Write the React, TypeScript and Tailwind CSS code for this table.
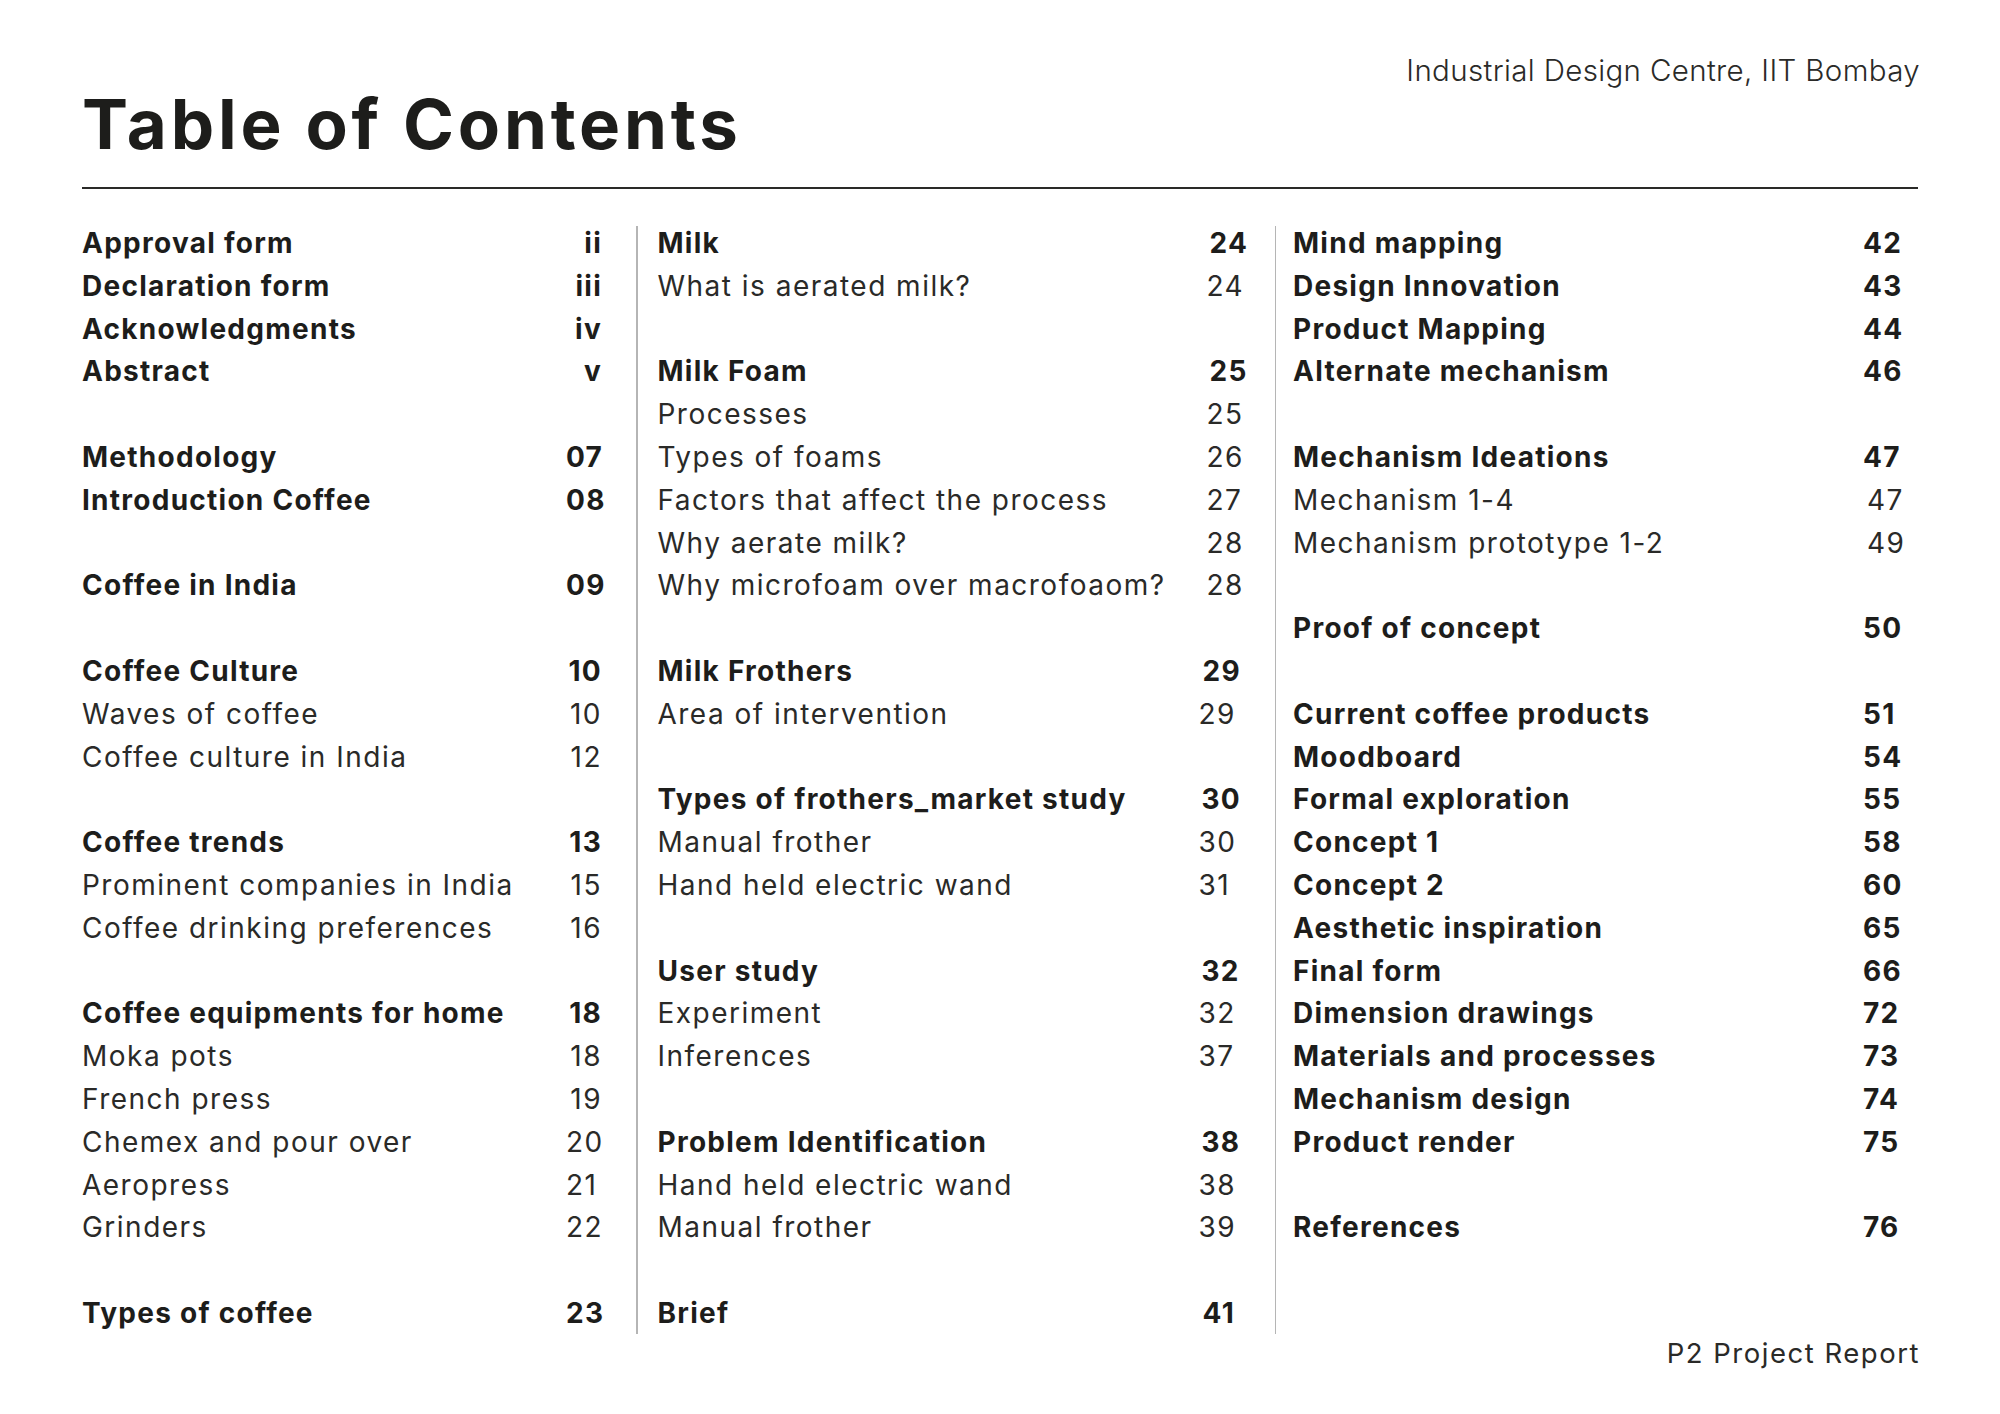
type Entry = { t?: string; n?: string; b?: boolean; a?: string }

const blank: Entry = {}

const colOne: Entry[] = [
  { t: 'Approval form', n: 'ii', b: true, a: 'text-left' },
  { t: 'Declaration form', n: 'iii', b: true, a: 'text-left' },
  { t: 'Acknowledgments', n: 'iv', b: true, a: 'text-left' },
  { t: 'Abstract', n: 'v', b: true, a: 'text-left' },
  blank,
  { t: 'Methodology', n: '07', b: true },
  { t: 'Introduction Coffee', n: '08', b: true },
  blank,
  { t: 'Coffee in India', n: '09', b: true },
  blank,
  { t: 'Coffee Culture', n: '10', b: true },
  { t: 'Waves of coffee', n: '10' },
  { t: 'Coffee culture in India', n: '12' },
  blank,
  { t: 'Coffee trends', n: '13', b: true },
  { t: 'Prominent companies in India', n: '15' },
  { t: 'Coffee drinking preferences', n: '16' },
  blank,
  { t: 'Coffee equipments for home', n: '18', b: true },
  { t: 'Moka pots', n: '18' },
  { t: 'French press', n: '19' },
  { t: 'Chemex and pour over', n: '20' },
  { t: 'Aeropress', n: '21', a: 'text-right pr-[9px]' },
  { t: 'Grinders', n: '22', a: 'text-right pr-[2px]' },
  blank,
  { t: 'Types of coffee', n: '23', b: true, a: 'text-right pr-[5px]' },
]

const colTwo: Entry[] = [
  { t: 'Milk', n: '24', b: true, a: 'pl-[11px]' },
  { t: 'What is aerated milk?', n: '24', a: 'pl-[8px]' },
  blank,
  { t: 'Milk Foam', n: '25', b: true, a: 'pl-[11px]' },
  { t: 'Processes', n: '25', a: 'pl-[8px]' },
  { t: 'Types of foams', n: '26', a: 'pl-[8px]' },
  { t: 'Factors that affect the process', n: '27', a: 'pl-[8px]' },
  { t: 'Why aerate milk?', n: '28', a: 'pl-[8px]' },
  { t: 'Why microfoam over macrofoaom?', n: '28', a: 'pl-[8px]' },
  blank,
  { t: 'Milk Frothers', n: '29', b: true, a: 'pl-[4px]' },
  { t: 'Area of intervention', n: '29' },
  blank,
  { t: 'Types of frothers_market study', n: '30', b: true, a: 'pl-[3px]' },
  { t: 'Manual frother', n: '30' },
  { t: 'Hand held electric wand', n: '31' },
  blank,
  { t: 'User study', n: '32', b: true, a: 'pl-[3px]' },
  { t: 'Experiment', n: '32' },
  { t: 'Inferences', n: '37' },
  blank,
  { t: 'Problem Identification', n: '38', b: true, a: 'pl-[3px]' },
  { t: 'Hand held electric wand', n: '38' },
  { t: 'Manual frother', n: '39' },
  blank,
  { t: 'Brief', n: '41', b: true, a: 'pl-[4px]' },
]

const colThree: Entry[] = [
  { t: 'Mind mapping', n: '42', b: true },
  { t: 'Design Innovation', n: '43', b: true },
  { t: 'Product Mapping', n: '44', b: true },
  { t: 'Alternate mechanism', n: '46', b: true },
  blank,
  { t: 'Mechanism Ideations', n: '47', b: true },
  { t: 'Mechanism 1-4', n: '47', a: 'pl-[4px]' },
  { t: 'Mechanism prototype 1-2', n: '49', a: 'pl-[4px]' },
  blank,
  { t: 'Proof of concept', n: '50', b: true },
  blank,
  { t: 'Current coffee products', n: '51', b: true },
  { t: 'Moodboard', n: '54', b: true },
  { t: 'Formal exploration', n: '55', b: true },
  { t: 'Concept 1', n: '58', b: true },
  { t: 'Concept 2', n: '60', b: true },
  { t: 'Aesthetic inspiration', n: '65', b: true },
  { t: 'Final form', n: '66', b: true },
  { t: 'Dimension drawings', n: '72', b: true },
  { t: 'Materials and processes', n: '73', b: true },
  { t: 'Mechanism design', n: '74', b: true },
  { t: 'Product render', n: '75', b: true },
  blank,
  { t: 'References', n: '76', b: true },
]

function Column({ rows, className, numClass }: { rows: Entry[]; className: string; numClass: string }) {
  return (
    <div className={`flex flex-col leading-[42.8px] ${className}`}>
      {rows.map((row, i) =>
        row.t ? (
          <div
            key={i}
            className={`flex h-[42.8px] whitespace-nowrap ${
              row.b
                ? 'font-bold tracking-[0.045em] text-[#1d1d1b]'
                : 'font-normal tracking-[0.053em] text-[#2a2a28]'
            }`}
          >
            <span className="flex-1">{row.t}</span>
            <span className={`${numClass} ${row.a ?? ''}`}>{row.n}</span>
          </div>
        ) : (
          <div key={i} className="h-[42.8px]" />
        )
      )}
    </div>
  )
}

export default function App() {
  return (
    <div className="min-h-[1414px] w-[2000px] bg-white px-[82px] pt-[56px] font-['Inter','Liberation_Sans',sans-serif] text-[#1d1d1b]">
      {/* Header */}
      <div className="flex items-start justify-between">
        <h1 className="mt-[34px] text-[69px] font-bold leading-none tracking-[0.055em]">Table of Contents</h1>
        <div className="-mr-[2px] text-[29.5px] font-light leading-none tracking-[0.012em] text-[#2a2a28]">
          Industrial Design Centre, IIT Bombay
        </div>
      </div>
      <div className="mt-[28px] h-[2px] bg-[#2a2a28]" />

      {/* Contents */}
      <div className="mt-[33px] flex text-[28px]">
        <Column rows={colOne} className="w-[554px] pr-[34px]" numClass="w-[36px] text-right" />
        <div className="mt-[4px] h-[1108px] w-[1.5px] bg-[#b5b5b5]" />
        <Column rows={colTwo} className="w-[637px] pl-[20px] pr-[26px]" numClass="w-[50px] text-left" />
        <div className="mt-[4px] h-[1108px] w-[1.5px] bg-[#b5b5b5]" />
        <Column rows={colThree} className="flex-1 pl-[17px] pr-[18px]" numClass="w-[37px] text-left" />
      </div>

      {/* Footer */}
      <div className="-mr-[2px] mt-[5px] text-right text-[27.5px] font-normal leading-none tracking-[0.055em] text-[#2a2a28]">
        P2 Project Report
      </div>
    </div>
  )
}
